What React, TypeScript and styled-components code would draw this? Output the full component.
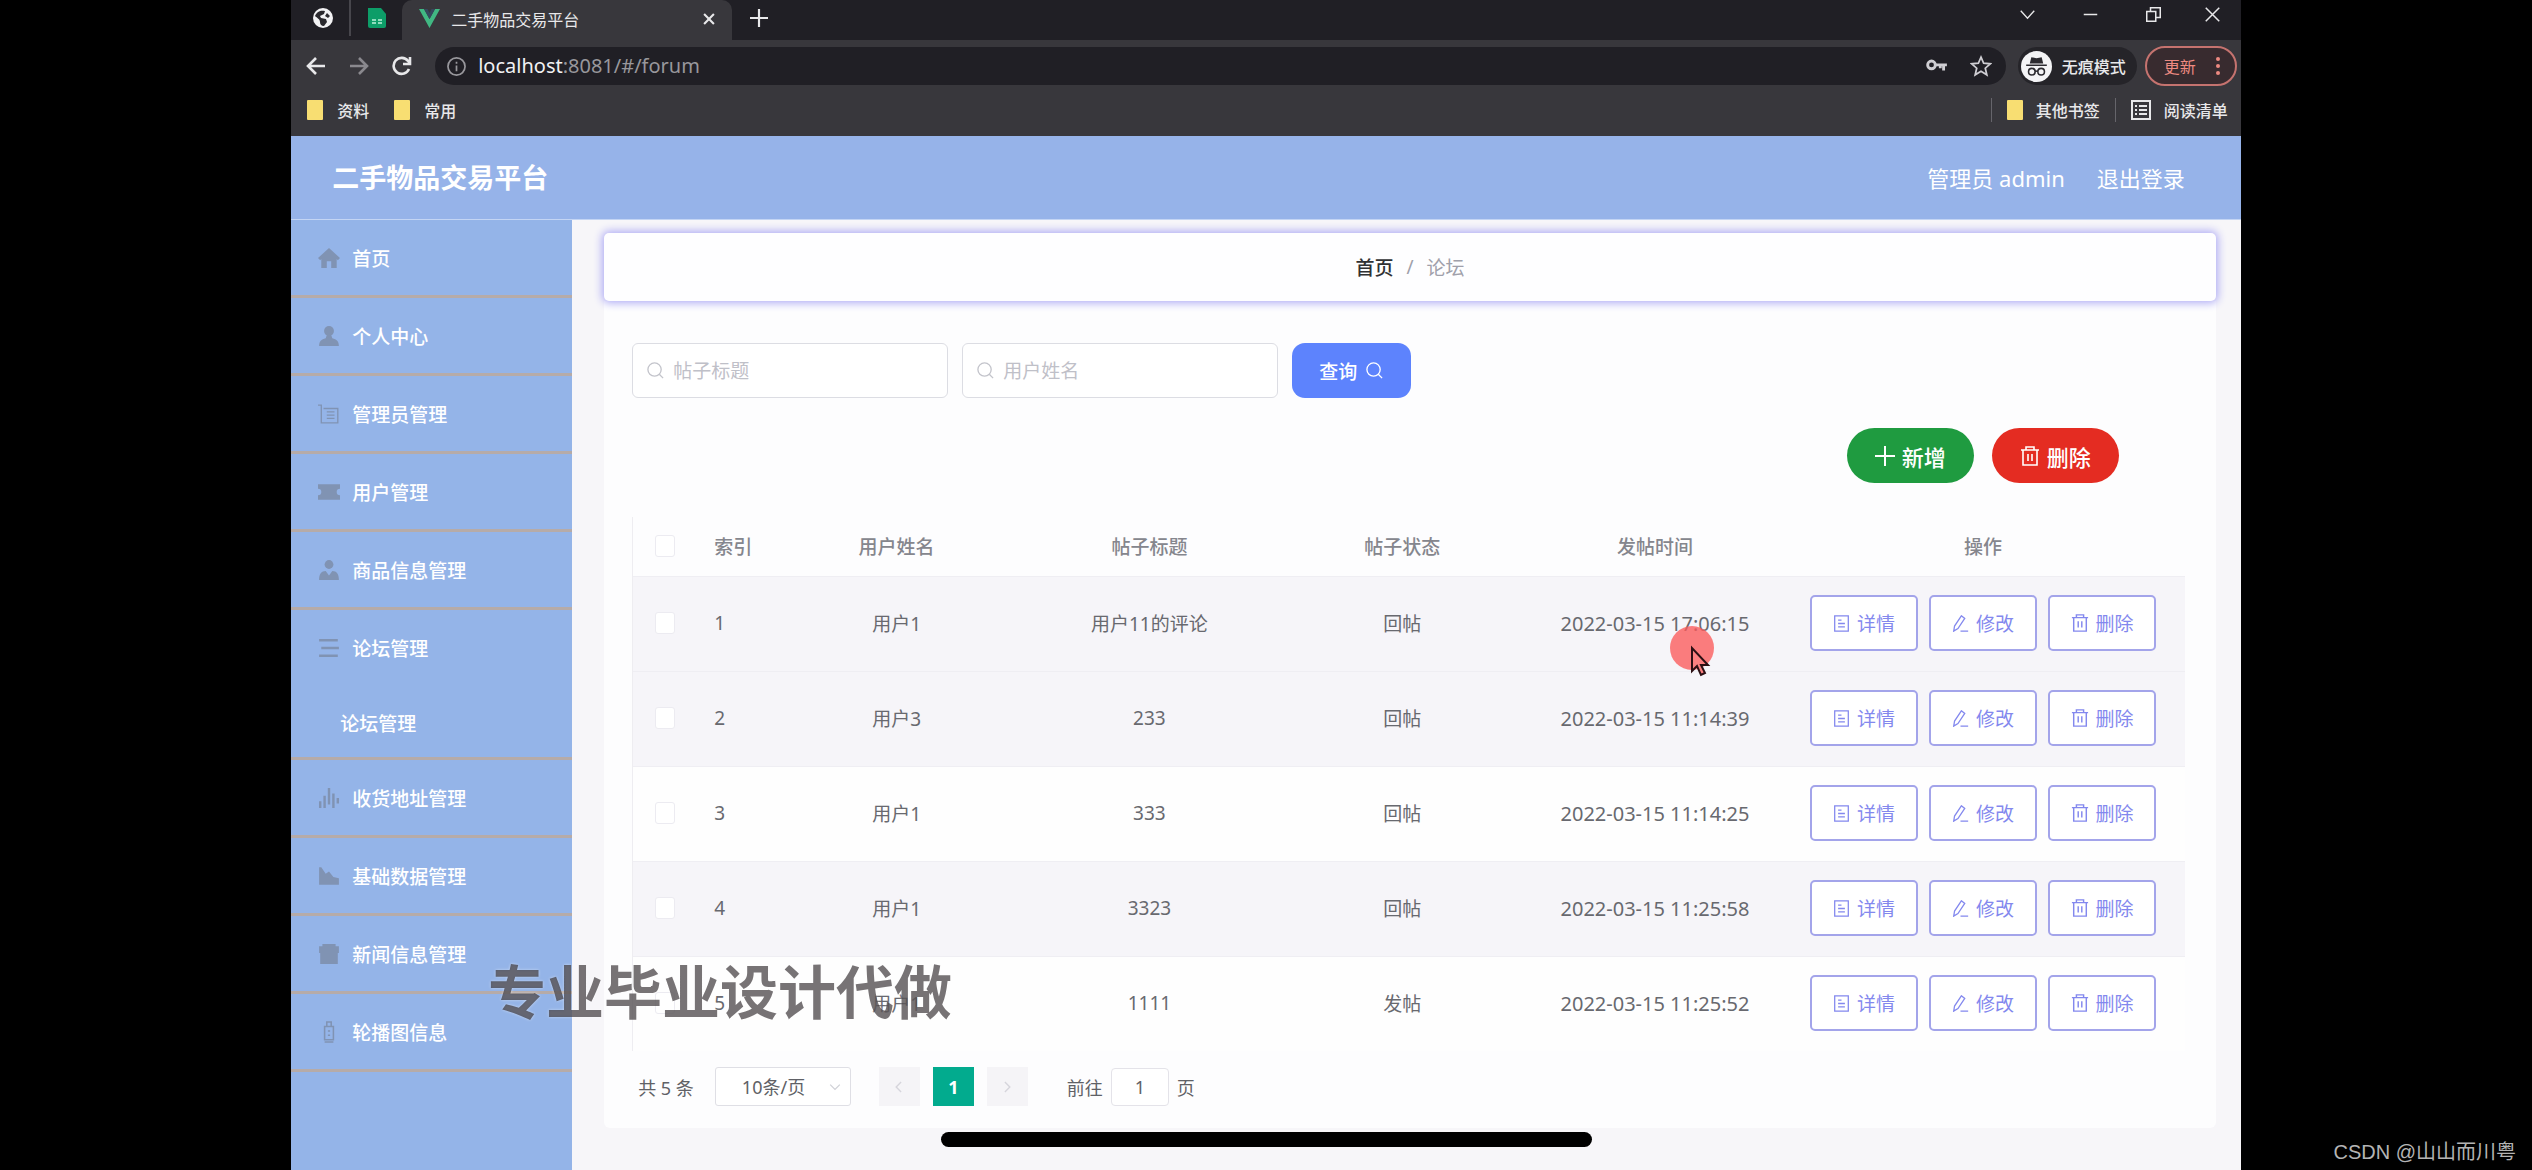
import React from "react";
import styled, { createGlobalStyle, css } from "styled-components";

const GlobalStyle = createGlobalStyle`
  * { box-sizing: border-box; }
  html, body { margin: 0; background: #000; }
  body, button, input, select {
    font-family: "Noto Sans", "Noto Sans CJK SC", sans-serif;
  }
  button { cursor: pointer; margin: 0; }
  a { color: inherit; text-decoration: none; }
  svg { display: block; flex: none; }
`;

const Stage = styled.div`
  position: relative;
  min-height: 100vh;
  display: flex;
  justify-content: center;
  background: #000;
  overflow: hidden;
`;

const Screen = styled.div`
  width: 77%;
  display: flex;
  flex-direction: column;
  background: #f7f6f9;
`;

/* ---------- browser chrome ---------- */

const TabStrip = styled.div`
  display: flex;
  height: 40px;
  background: #201f25;
  color: #e8e8ea;
`;

const PinnedTab = styled.div<{ $divided?: boolean }>`
  display: flex;
  align-items: center;
  justify-content: center;
  width: ${(p) => (p.$divided ? 60 : 51)}px;
  height: 36px;
  padding-left: ${(p) => (p.$divided ? 6 : 0)}px;
  ${(p) => p.$divided && css`border-right: 2px solid #47464c;`}
`;

const ActiveTab = styled.div`
  display: flex;
  align-items: center;
  gap: 11px;
  width: 330px;
  padding: 0 16px 3px 17px;
  background: #38373c;
  border-radius: 10px 10px 0 0;
  font-size: 16px;
`;

const TabTitle = styled.span`
  flex: 1;
  white-space: nowrap;
`;

const BareButton = styled.button`
  display: flex;
  align-items: center;
  justify-content: center;
  padding: 0;
  border: 0;
  background: none;
  color: inherit;
`;

const NewTab = styled(BareButton)`
  width: 54px;
  height: 36px;
`;

const WindowControls = styled.div`
  display: flex;
  height: 28px;
  margin-left: auto;
`;

const WindowButton = styled(BareButton)`
  width: 63px;
  &:last-child { width: 56px; }
`;

const Toolbar = styled.div`
  display: flex;
  align-items: center;
  height: 52px;
  padding: 0 4px 0 13px;
  background: #38373c;
  color: #e8e8ea;
`;

const NavButtons = styled.div`
  display: flex;
  gap: 19px;
  margin-right: 21px;
`;

const NavButton = styled(BareButton)<{ $off?: boolean }>`
  width: 24px;
  color: ${(p) => (p.$off ? "#8a898e" : "#e8e8ea")};
`;

const AddressBar = styled.div`
  flex: 1;
  display: flex;
  align-items: center;
  gap: 12px;
  height: 38px;
  padding: 0 14px 0 12px;
  border-radius: 19px;
  background: #201f25;
  color: #98979c;
  font-size: 20px;
  line-height: 24px;
`;

const Url = styled.span`
  flex: 1;
  b { font-weight: 400; color: #f1f1f3; }
`;

const AddressIcons = styled.span`
  display: flex;
  gap: 22px;
  color: #cfced3;
`;

const Incognito = styled.div`
  display: flex;
  align-items: center;
  gap: 10px;
  height: 38px;
  margin: 0 8px 0 12px;
  padding: 0 11px 0 3px;
  border-radius: 19px;
  background: #252429;
  font-size: 16px;
  font-weight: 500;
`;

const UpdateButton = styled.button`
  display: flex;
  align-items: center;
  gap: 20px;
  height: 40px;
  padding: 0 15px 0 17px;
  border: 2px solid #c5736f;
  border-radius: 20px;
  background: #382b2f;
  color: #ee8a81;
  font-size: 16px;
`;

const BookmarkBar = styled.nav`
  display: flex;
  align-items: center;
  height: 44px;
  padding: 0 13px 8px 16px;
  background: #38373c;
  color: #e8e8ea;
  font-size: 16px;
  font-weight: 500;
`;

const Bookmark = styled.a`
  display: flex;
  align-items: center;
  gap: 14px;
  margin-right: 25px;
  white-space: nowrap;
`;

const Folder = styled.span`
  width: 16px;
  height: 20px;
  background: #f8de72;
  border-radius: 1px;
`;

const BookmarksRight = styled.div`
  display: flex;
  align-items: center;
  gap: 15px;
  margin-left: auto;
  ${Bookmark} { margin-right: 0; gap: 13px; }
`;

const ThinRule = styled.span`
  width: 1px;
  height: 24px;
  background: #66656b;
`;

/* ---------- page frame ---------- */

const PageHeader = styled.header`
  display: flex;
  align-items: center;
  height: 84px;
  padding: 0 56px 0 41px;
  background: #96b3e9;
  border-bottom: 1px solid #c4d5f4;
  color: #fff;
`;

const Brand = styled.h1`
  flex: 1;
  margin: 0;
  font-size: 27px;
  line-height: 40px;
  font-weight: 700;
`;

const HeaderLinks = styled.div`
  display: flex;
  gap: 32px;
  font-size: 22px;
  line-height: 32px;
`;

const Body = styled.div`
  flex: 1;
  display: flex;
`;

const Sidebar = styled.nav`
  width: 281px;
  flex: none;
  background: #94b4e8;
`;

const MenuItem = styled.a<{ $open?: boolean }>`
  display: flex;
  align-items: center;
  gap: 12px;
  height: 78px;
  padding-left: 27px;
  border-bottom: 3px solid ${(p) => (p.$open ? "transparent" : "#b6aba8")};
  color: #fff;
  font-size: 19px;
  font-weight: 500;
  svg { color: #8093b3; }
`;

const SubItem = styled.a`
  display: flex;
  align-items: center;
  height: 72px;
  padding-left: 49px;
  border-bottom: 3px solid #b6aba8;
  color: #fff;
  font-size: 19px;
  font-weight: 500;
`;

const Main = styled.main`
  flex: 1;
  min-width: 0;
  padding: 13px 25px 43px 32px;
`;

const Breadcrumb = styled.nav`
  position: relative;
  display: flex;
  align-items: center;
  justify-content: center;
  gap: 13px;
  height: 68px;
  border-radius: 5px;
  background: #fefeff;
  box-shadow: 0 0 9px 2px #aeabf5;
  color: #a0a0aa;
  font-size: 19px;
  a { color: #303133; font-weight: 500; }
`;

const Card = styled.section`
  padding: 42px 31px 22px 28px;
  background: #fdfdfe;
  border-radius: 0 0 6px 6px;
`;

/* ---------- search and actions ---------- */

const SearchForm = styled.form`
  display: flex;
  gap: 14px;
`;

const SearchField = styled.label`
  display: flex;
  align-items: center;
  gap: 8px;
  width: 316px;
  height: 55px;
  padding: 0 13px;
  border: 1px solid #dcdde3;
  border-radius: 6px;
  background: #fff;
  color: #c3c4cb;
  input {
    flex: 1;
    min-width: 0;
    padding: 0;
    border: 0;
    outline: 0;
    background: none;
    font-size: 19px;
  }
  input::placeholder { color: #bfc0c8; }
`;

const QueryButton = styled.button`
  display: flex;
  align-items: center;
  justify-content: center;
  gap: 8px;
  width: 119px;
  height: 55px;
  padding: 0;
  border: 0;
  border-radius: 13px;
  background: #5d83fd;
  color: #fff;
  font-size: 19px;
  font-weight: 500;
`;

const Actions = styled.div`
  display: flex;
  justify-content: flex-end;
  gap: 18px;
  margin: 30px 66px 34px 0;
`;

const PillButton = styled.button<{ $color: string }>`
  display: flex;
  align-items: center;
  justify-content: center;
  gap: 7px;
  width: 127px;
  height: 55px;
  padding: 0;
  border: 0;
  border-radius: 28px;
  background: ${(p) => p.$color};
  color: #fff;
  font-size: 22px;
  font-weight: 500;
`;

/* ---------- table ---------- */

const Table = styled.table`
  width: 100%;
  table-layout: fixed;
  border-collapse: separate;
  border-spacing: 0;
  border-left: 1px solid #eeedf1;
  color: #68696f;
  font-size: 19px;
`;

const Col = styled.col<{ $width?: string }>`
  width: ${(p) => p.$width ?? "auto"};
`;

const HeadCell = styled.th<{ $left?: boolean }>`
  height: 59px;
  padding: ${(p) => (p.$left ? "0 0 2px 17px" : "0 0 2px")};
  text-align: ${(p) => (p.$left ? "left" : "center")};
  font-weight: 500;
  color: #85868d;
`;

const Row = styled.tr<{ $shaded?: boolean }>`
  background: ${(p) => (p.$shaded ? "#f6f5f9" : "#fefefe")};
`;

const Cell = styled.td<{ $left?: boolean; $large?: boolean }>`
  height: 95px;
  padding: ${(p) => (p.$left ? "0 0 2px 17px" : "0 0 2px")};
  border-top: 1px solid #efeef3;
  text-align: ${(p) => (p.$left ? "left" : "center")};
  font-size: ${(p) => (p.$large ? 20 : 19)}px;
  white-space: nowrap;
`;

const Check = styled.input`
  appearance: none;
  display: block;
  width: 20px;
  height: 22px;
  margin: 0 auto;
  border: 1px solid #ecebf1;
  border-radius: 3px;
  background: #fff;
`;

const RowActions = styled.div`
  display: flex;
  justify-content: center;
  gap: 11px;
`;

const OutlineButton = styled.button`
  display: flex;
  align-items: center;
  justify-content: center;
  gap: 7px;
  width: 108px;
  height: 56px;
  padding: 0;
  border: 2px solid #a3a4ea;
  border-radius: 5px;
  background: #fff;
  color: #8388ee;
  font-size: 19px;
`;

/* ---------- pagination ---------- */

const Pagination = styled.nav`
  display: flex;
  align-items: center;
  height: 39px;
  margin-top: 16px;
  padding-left: 6px;
  color: #606166;
  font-size: 18px;
`;

const SizeSelect = styled.div`
  position: relative;
  margin: 0 28px 0 21px;
  select {
    appearance: none;
    display: block;
    width: 136px;
    height: 39px;
    padding: 0 0 0 26px;
    border: 1px solid #dfdfe5;
    border-radius: 3px;
    background: #fff;
    color: #606166;
    font-size: 18px;
  }
  svg { position: absolute; right: 10px; top: 14px; color: #cfd0d6; }
`;

const PageButton = styled.button<{ $active?: boolean }>`
  display: flex;
  align-items: center;
  justify-content: center;
  width: 41px;
  height: 39px;
  margin-right: 13px;
  padding: 0;
  border: 0;
  background: ${(p) => (p.$active ? "#02ab8e" : "#f5f4f7")};
  color: ${(p) => (p.$active ? "#fff" : "#d6d5dc")};
  font-size: 18px;
  font-weight: 700;
`;

const Jump = styled.label`
  display: flex;
  align-items: center;
  gap: 8px;
  margin-left: 26px;
  input {
    width: 58px;
    height: 38px;
    padding: 0;
    border: 1px solid #e4e3e9;
    border-radius: 4px;
    background: #fff;
    color: #606166;
    font-size: 18px;
    text-align: center;
  }
`;

/* ---------- overlays ---------- */

const HomeIndicator = styled.div`
  position: absolute;
  left: 50%;
  bottom: 24px;
  width: 651px;
  height: 15px;
  margin-left: -325px;
  border-radius: 8px;
  background: #000;
`;

const Watermark = styled.div`
  position: absolute;
  left: 488px;
  top: 952px;
  color: rgba(48, 42, 46, 0.66);
  font-size: 58px;
  line-height: 80px;
  font-weight: 700;
  text-shadow: 0 0 3px rgba(255, 255, 255, 0.5);
  pointer-events: none;
`;

const Credit = styled.div`
  position: absolute;
  right: 16px;
  bottom: 5px;
  color: #b4b4b4;
  font-size: 20px;
  line-height: 28px;
  font-family: "Liberation Sans", "Noto Sans CJK SC", sans-serif;
`;

const Pointer = styled.div`
  position: absolute;
  left: 1670px;
  top: 626px;
  pointer-events: none;
`;

/* ---------- icons ---------- */

type Shape = { size?: number; children: React.ReactNode; width?: number };

const Line = ({ size = 20, width = 2, children }: Shape) => (
  <svg width={size} height={size} viewBox="0 0 20 20" fill="none" stroke="currentColor" strokeWidth={width} aria-hidden="true">
    {children}
  </svg>
);

const Solid = ({ size = 22, children }: Shape) => (
  <svg width={size} height={size} viewBox="0 0 20 20" fill="currentColor" aria-hidden="true">
    {children}
  </svg>
);

const GlobeIcon = () => (
  <svg width="20" height="20" viewBox="0 0 20 20" aria-hidden="true">
    <circle cx="10" cy="10" r="10" fill="#f2f2f4" />
    <path d="M2 8c2-5 6-6 10-5l-1 3-4 2 1 2 5 1 1 3-3 4c-3 0-4-2-4-4 0-3-3-4-5-6zM14 5l3 3-2 2-3-2z" fill="#2a292e" />
  </svg>
);

const SheetIcon = () => (
  <svg width="20" height="20" viewBox="0 0 20 20" aria-hidden="true">
    <path d="M1 0h13l5 6v12a2 2 0 0 1-2 2H3a2 2 0 0 1-2-2z" fill="#0d9d68" />
    <path d="M5 11h4v2H5zM11 11h4v2h-4zM5 14h4v2H5zM11 14h4v2h-4z" fill="#8fdcbd" />
  </svg>
);

const VueIcon = () => (
  <svg width="21" height="19" viewBox="0 0 21 19" aria-hidden="true">
    <path d="M0 0h5l5.500 10L16 0h5L10.500 19z" fill="#41b883" />
    <path d="M5 0h3.500l2 4 2-4H16l-5.500 10z" fill="#35495e" />
  </svg>
);

const SearchIcon = ({ size = 19 }: { size?: number }) => (
  <Line size={size} width={1.4}>
    <circle cx="9" cy="9" r="7" />
    <path d="M14 14l4 4" />
  </Line>
);

const TrashIcon = ({ size = 18 }: { size?: number }) => (
  <Line size={size} width={1.6}>
    <path d="M1 4h18M6 4V1h8v3M3 4v15h14V4M8 8v7M12 8v7" />
  </Line>
);

const DetailIcon = () => (
  <Line size={17} width={1.5}>
    <path d="M2 1h16v18H2zM6 6h4M6 10h8M6 14h8" />
  </Line>
);

const EditIcon = () => (
  <Line size={17} width={1.5}>
    <path d="M11 1l4 3-8 12-5 3 1-6zM10 19h9" />
  </Line>
);

const IncognitoIcon = () => (
  <svg width="31" height="31" viewBox="0 0 30 30" aria-hidden="true">
    <circle cx="15" cy="15" r="15" fill="#f4f4f6" />
    <path d="M10 6l5 1 5-1 1.500 6h-13zM5 13h20v1.500H5z" fill="#2c2b30" />
    <g fill="none" stroke="#2c2b30" strokeWidth="1.500">
      <circle cx="10.500" cy="20" r="3.200" />
      <circle cx="19.500" cy="20" r="3.200" />
      <path d="M13.500 19.500h3" />
    </g>
  </svg>
);

const HomeIcon = () => (
  <Solid><path d="M10 1L0 10l2 2 1-1v8h5v-6h4v6h5v-8l1 1 2-2z" /></Solid>
);
const UserIcon = () => (
  <Solid><circle cx="10" cy="5.500" r="4.500" /><path d="M1 19c0-4 2-6 6-7l1-3h4l1 3c4 1 6 3 6 7z" /></Solid>
);
const TicketsIcon = () => (
  <Line size={22} width={1.2}><path d="M0 2h3v16h15V5H5M8 8h7M8 11h7M8 14h7" /></Line>
);
const CouponIcon = () => (
  <Solid><path d="M0 3h20v4a3 3 0 0 0 0 6v4H0v-4a3 3 0 0 0 0-6z" /></Solid>
);
const GoodsIcon = () => (
  <Solid><circle cx="10" cy="5" r="4" /><path d="M1 19c0-5 2-8 6-8l3 4 3-4c4 0 6 3 6 8z" /></Solid>
);
const ListIcon = () => (
  <Line size={22} width={2.2}><path d="M1 3h17M3 10h16M1 17h17" /></Line>
);
const ChartIcon = () => (
  <Line size={22} width={2.2}><path d="M2 19v-6M6 19V8M10 16V1M14 19V6M18 15v-5" /></Line>
);
const DataIcon = () => (
  <Solid><path d="M1 2h2l4 6 3-2 4 5 5 1v6H1z" /></Solid>
);
const NewsIcon = () => (
  <Solid><path d="M1 3h3V1h12v2h3v6h-1v10H2V9H1z" /></Solid>
);
const BannerIcon = () => (
  <Line size={22} width={1.4}><path d="M6 5h8v12H6zM8 5V1h4v4M9 9h2M9 13h2M6 19h8" /></Line>
);

/* ---------- data ---------- */

const menuTop = [
  { label: "首页", icon: <HomeIcon /> },
  { label: "个人中心", icon: <UserIcon /> },
  { label: "管理员管理", icon: <TicketsIcon /> },
  { label: "用户管理", icon: <CouponIcon /> },
  { label: "商品信息管理", icon: <GoodsIcon /> },
  { label: "论坛管理", icon: <ListIcon />, open: true },
];

const menuBottom = [
  { label: "收货地址管理", icon: <ChartIcon /> },
  { label: "基础数据管理", icon: <DataIcon /> },
  { label: "新闻信息管理", icon: <NewsIcon /> },
  { label: "轮播图信息", icon: <BannerIcon /> },
];

const posts = [
  { id: 1, user: "用户1", title: "用户11的评论", state: "回帖", time: "2022-03-15 17:06:15", shaded: true },
  { id: 2, user: "用户3", title: "233", state: "回帖", time: "2022-03-15 11:14:39", shaded: true },
  { id: 3, user: "用户1", title: "333", state: "回帖", time: "2022-03-15 11:14:25", shaded: false },
  { id: 4, user: "用户1", title: "3323", state: "回帖", time: "2022-03-15 11:25:58", shaded: true },
  { id: 5, user: "用户1", title: "1111", state: "发帖", time: "2022-03-15 11:25:52", shaded: false },
];

/* ---------- sections ---------- */

const BrowserChrome = () => (
  <>
    <TabStrip>
      <PinnedTab $divided><GlobeIcon /></PinnedTab>
      <PinnedTab><SheetIcon /></PinnedTab>
      <ActiveTab>
        <VueIcon />
        <TabTitle>二手物品交易平台</TabTitle>
        <BareButton aria-label="关闭标签页">
          <Line size={14} width={3}><path d="M3 3l14 14M17 3L3 17" /></Line>
        </BareButton>
      </ActiveTab>
      <NewTab aria-label="新标签页">
        <Line size={18} width={2.4}><path d="M10 0v20M0 10h20" /></Line>
      </NewTab>
      <WindowControls>
        <WindowButton aria-label="搜索标签页"><Line size={15} width={1.8}><path d="M1 5l9 10 9-10" /></Line></WindowButton>
        <WindowButton aria-label="最小化"><Line size={15}><path d="M1 10h18" /></Line></WindowButton>
        <WindowButton aria-label="还原"><Line size={15}><path d="M1 6h12v13H1zM6 6V1h13v13h-6" /></Line></WindowButton>
        <WindowButton aria-label="关闭"><Line size={15}><path d="M1 1l18 18M19 1L1 19" /></Line></WindowButton>
      </WindowControls>
    </TabStrip>
    <Toolbar>
      <NavButtons>
        <NavButton aria-label="后退"><Line width={2.6}><path d="M19 10H2M10 2l-8 8 8 8" /></Line></NavButton>
        <NavButton aria-label="前进" $off><Line width={2.6}><path d="M1 10h17M10 2l8 8-8 8" /></Line></NavButton>
        <NavButton aria-label="刷新">
          <Line width={2.6}><path d="M17 13a8 8 0 1 1-1-8l2 2M18 1v7h-7" /></Line>
        </NavButton>
      </NavButtons>
      <AddressBar>
        <Line size={19} width={1.8}><circle cx="10" cy="10" r="9" /><path d="M10 9v6M10 5v2" /></Line>
        <Url><b>localhost</b>:8081/#/forum</Url>
        <AddressIcons>
          <Line size={22} width={2.6}><circle cx="5" cy="9" r="3.500" /><path d="M9 9h10M16 9v5M13 9v3" /></Line>
          <Line size={22} width={1.6}><path d="M10 2l2.400 5.500 6 .5-4.500 4 1.400 6L10 14.800 4.700 18l1.400-6L1.600 8l6-.5z" /></Line>
        </AddressIcons>
      </AddressBar>
      <Incognito><IncognitoIcon />无痕模式</Incognito>
      <UpdateButton>
        更新
        <svg width="4" height="20" viewBox="0 0 4 20" fill="currentColor" aria-hidden="true">
          <circle cx="2" cy="3" r="2" /><circle cx="2" cy="10" r="2" /><circle cx="2" cy="17" r="2" />
        </svg>
      </UpdateButton>
    </Toolbar>
    <BookmarkBar>
      <Bookmark href="#"><Folder />资料</Bookmark>
      <Bookmark href="#"><Folder />常用</Bookmark>
      <BookmarksRight>
        <ThinRule />
        <Bookmark href="#"><Folder />其他书签</Bookmark>
        <ThinRule />
        <Bookmark href="#">
          <Line><path d="M1 1h18v18H1zM4 6h2M4 10h2M4 14h2M8 6h8M8 10h8M8 14h8" /></Line>
          阅读清单
        </Bookmark>
      </BookmarksRight>
    </BookmarkBar>
  </>
);

const SideMenu = () => (
  <Sidebar>
    {menuTop.map((m) => (
      <MenuItem key={m.label} href="#" $open={m.open}>{m.icon}{m.label}</MenuItem>
    ))}
    <SubItem href="#">论坛管理</SubItem>
    {menuBottom.map((m) => (
      <MenuItem key={m.label} href="#">{m.icon}{m.label}</MenuItem>
    ))}
  </Sidebar>
);

const PostTable = () => (
  <Table>
    <colgroup>
      <Col $width="64px" />
      <Col $width="73px" />
      <Col /><Col /><Col /><Col />
      <Col $width="26%" />
    </colgroup>
    <thead>
      <tr>
        <HeadCell><Check type="checkbox" aria-label="全选" /></HeadCell>
        <HeadCell $left>索引</HeadCell>
        <HeadCell>用户姓名</HeadCell>
        <HeadCell>帖子标题</HeadCell>
        <HeadCell>帖子状态</HeadCell>
        <HeadCell>发帖时间</HeadCell>
        <HeadCell>操作</HeadCell>
      </tr>
    </thead>
    <tbody>
      {posts.map((p) => (
        <Row key={p.id} $shaded={p.shaded}>
          <Cell><Check type="checkbox" aria-label={`选择 ${p.id}`} /></Cell>
          <Cell $left>{p.id}</Cell>
          <Cell>{p.user}</Cell>
          <Cell>{p.title}</Cell>
          <Cell>{p.state}</Cell>
          <Cell $large>{p.time}</Cell>
          <Cell>
            <RowActions>
              <OutlineButton><DetailIcon />详情</OutlineButton>
              <OutlineButton><EditIcon />修改</OutlineButton>
              <OutlineButton><TrashIcon />删除</OutlineButton>
            </RowActions>
          </Cell>
        </Row>
      ))}
    </tbody>
  </Table>
);

const Pager = () => (
  <Pagination aria-label="分页">
    <span>共 5 条</span>
    <SizeSelect>
      <select aria-label="每页条数" defaultValue="10">
        <option value="10">10条/页</option>
        <option value="20">20条/页</option>
      </select>
      <Line size={12}><path d="M2 6l8 8 8-8" /></Line>
    </SizeSelect>
    <PageButton aria-label="上一页"><Line size={14}><path d="M13 3l-7 7 7 7" /></Line></PageButton>
    <PageButton $active>1</PageButton>
    <PageButton aria-label="下一页"><Line size={14}><path d="M7 3l7 7-7 7" /></Line></PageButton>
    <Jump>前往<input type="text" defaultValue="1" />页</Jump>
  </Pagination>
);

export default function App() {
  return (
    <Stage>
      <GlobalStyle />
      <Screen>
        <BrowserChrome />
        <PageHeader>
          <Brand>二手物品交易平台</Brand>
          <HeaderLinks>
            <span>管理员 admin</span>
            <a href="#">退出登录</a>
          </HeaderLinks>
        </PageHeader>
        <Body>
          <SideMenu />
          <Main>
            <Breadcrumb>
              <a href="#">首页</a>
              <span>/</span>
              <span>论坛</span>
            </Breadcrumb>
            <Card>
              <SearchForm onSubmit={(e) => e.preventDefault()}>
                <SearchField>
                  <SearchIcon />
                  <input type="text" placeholder="帖子标题" aria-label="帖子标题" />
                </SearchField>
                <SearchField>
                  <SearchIcon />
                  <input type="text" placeholder="用户姓名" aria-label="用户姓名" />
                </SearchField>
                <QueryButton type="submit">查询<SearchIcon /></QueryButton>
              </SearchForm>
              <Actions>
                <PillButton $color="#1f9b40">
                  <Line><path d="M10 0v20M0 10h20" /></Line>新增
                </PillButton>
                <PillButton $color="#e42c22"><TrashIcon size={20} />删除</PillButton>
              </Actions>
              <PostTable />
              <Pager />
            </Card>
          </Main>
        </Body>
      </Screen>
      <HomeIndicator />
      <Watermark>专业毕业设计代做</Watermark>
      <Pointer>
        <svg width="48" height="54" viewBox="0 0 48 54" aria-hidden="true">
          <circle cx="22" cy="22" r="22" fill="#fb5a5a" fillOpacity="0.78" />
          <path d="M22 22v23l5-5 4 9 4-2-4-8h7z" fill="#fb8080" stroke="#2c1014" strokeWidth="2" />
        </svg>
      </Pointer>
      <Credit>CSDN @山山而川粤</Credit>
    </Stage>
  );
}
